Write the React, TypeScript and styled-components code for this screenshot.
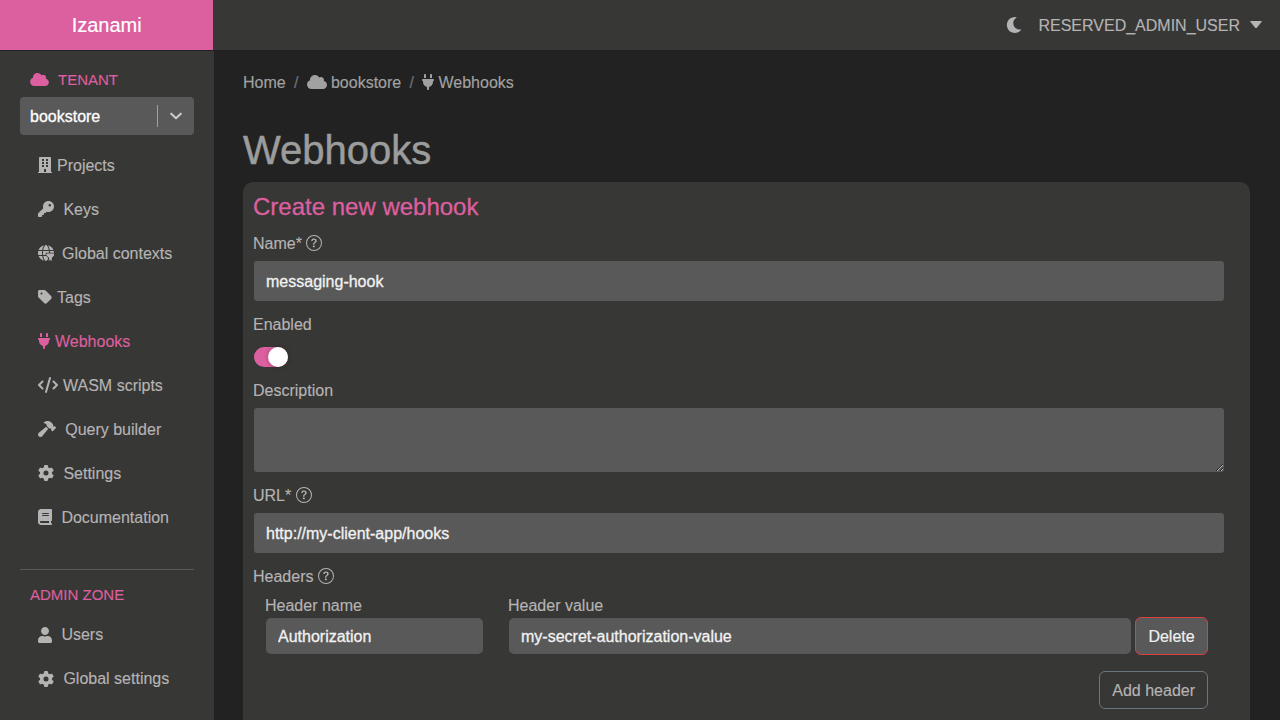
import React from "react";
import styled, { createGlobalStyle } from "styled-components";
import { BsQuestionCircle } from "react-icons/bs";
import { FaBuilding, FaMoon, FaUser } from "react-icons/fa";
import {
  FaBook,
  FaCloud,
  FaCode,
  FaGear,
  FaGlobe,
  FaHammer,
  FaKey,
  FaPlug,
  FaTag,
} from "react-icons/fa6";

const pink = "#dc5f9f";
const panel = "#373735";
const field = "#595959";
const muted = "#b5b3b3";

const GlobalStyle = createGlobalStyle`
  *, *::before, *::after { box-sizing: border-box; }
  body {
    margin: 0;
    background: #222;
    color: ${muted};
    font: 400 16px/24px "Liberation Sans", Arial, Helvetica, sans-serif;
    -webkit-text-stroke: 0.15px currentColor;
    overflow: hidden;
  }
  svg { display: block; flex: none; }
`;

const Page = styled.div`
  display: flex;
  flex-direction: column;
  height: 720px;
  overflow: hidden;
`;

const TopBar = styled.header`
  display: flex;
  flex: none;
  height: 50px;
  background: ${panel};
`;

const Brand = styled.a`
  width: 213.4px;
  background: ${pink};
  color: #fff;
  font-size: 20px;
  line-height: 50px;
  text-align: center;
`;

const Account = styled.div`
  display: flex;
  align-items: center;
  margin-left: auto;
  padding-right: 18px;
`;

const Text = styled.span<{ $drop?: number }>`
  padding-top: ${(p) => p.$drop ?? 2}px;
`;

const UserName = styled(Text)`
  margin: 0 10px 0 16px;
`;

const Body = styled.div`
  display: flex;
  flex: 1;
  min-height: 0;
`;

const Sidebar = styled.nav`
  flex: none;
  width: 214px;
  margin-top: 1px;
  padding: 17px 20px 0;
  background: ${panel};
`;

const ZoneTitle = styled.div`
  display: flex;
  align-items: center;
  gap: 9px;
  height: 22px;
  padding-left: 10px;
  color: ${pink};
  font-size: 15px;
  line-height: 22px;
`;

const TenantSelect = styled.div`
  display: flex;
  align-items: center;
  width: 173.5px;
  height: 38px;
  margin: 7px 0 8px;
  padding-left: 10px;
  border-radius: 4px;
  background: ${field};
  color: #fff;
  -webkit-text-stroke: 0.3px #fff;
`;

const SelectDivider = styled.span`
  width: 1px;
  height: 22px;
  margin-left: auto;
  background: #a0a0a0;
`;

const SelectArrow = styled.span`
  display: grid;
  place-items: center;
  width: 36px;
  color: #ccc;
`;

const NavItem = styled.a<{ $gap: number; $active?: boolean }>`
  display: flex;
  align-items: center;
  gap: ${(p) => p.$gap}px;
  height: 44px;
  padding-left: 18px;
  color: ${(p) => (p.$active ? pink : muted)};
`;

const ZoneRule = styled.hr`
  width: 173.5px;
  height: 1px;
  margin: 30px 0 14px;
  border: 0;
  background: #5a5a58;
`;

const AdminList = styled.div`
  padding-top: 7px;
`;

const Main = styled.main`
  flex: 1;
  min-width: 0;
  padding: 20px 30px 0 29px;
`;

const Breadcrumb = styled.div`
  display: flex;
  align-items: center;
  height: 24px;
  color: #a1a1a1;
`;

const Crumb = styled.span`
  display: flex;
  align-items: center;
  gap: 4.45px;
`;

const Slash = styled(Text)`
  margin: 0 8.2px;
  color: #6c757d;
`;

const Title = styled.h1`
  margin: 32px 0 8px;
  color: #9c9c9c;
  font-size: 40px;
  font-weight: 400;
  line-height: 48px;
  -webkit-text-stroke: 0.5px currentColor;
`;

const Panel = styled.section`
  height: 600px;
  padding: 10px 26px 0 10px;
  border-radius: 10px;
  background: ${panel};
`;

const PanelTitle = styled.h2`
  margin: 0 0 10px;
  color: ${pink};
  font-size: 24px;
  font-weight: 400;
  line-height: 29px;
  -webkit-text-stroke: 0.3px currentColor;
`;

const LabelRow = styled.label`
  display: flex;
  align-items: center;
  gap: 4.45px;
  height: 24px;
`;

const TextField = styled.input<{ $compact?: boolean; $width?: number }>`
  display: block;
  width: ${(p) => (p.$width ? `${p.$width}px` : "calc(100% - 1px)")};
  height: ${(p) => (p.$compact ? 36 : 40)}px;
  margin: ${(p) => (p.$compact ? "1px 0 0 1px" : "6px 0 11px 1px")};
  padding: 2px 12px 0;
  border: 0;
  border-radius: ${(p) => (p.$compact ? 5 : 3)}px;
  outline: 0;
  background: ${field};
  color: #f2f2f2;
  font: inherit;
  -webkit-text-stroke: 0.3px #f2f2f2;
`;

const TextArea = styled.textarea`
  display: block;
  width: calc(100% - 1px);
  height: 64px;
  margin: 6px 0 11px 1px;
  border: 0;
  border-radius: 3px;
  outline: 0;
  background: ${field};
  resize: vertical;
`;

const Switch = styled.div`
  display: flex;
  justify-content: flex-end;
  width: 33.5px;
  height: 20px;
  margin: 11px 0 11px 1.3px;
  border-radius: 10px;
  background: ${pink};
`;

const SwitchKnob = styled.span`
  width: 20px;
  height: 20px;
  border-radius: 50%;
  background: #fff;
  box-shadow: 0 0 5px rgba(0, 0, 0, 0.25);
`;

const HeaderRow = styled.div`
  display: flex;
  align-items: flex-end;
  padding: 5px 16px 0 12px;
`;

const HeaderColumn = styled.div<{ $gap: number }>`
  margin-right: ${(p) => p.$gap}px;
`;

const Button = styled.button<{ $danger?: boolean }>`
  height: 38px;
  padding: 2px 12px 0;
  border: 1px solid ${(p) => (p.$danger ? "#dc3f3c" : "#6c757d")};
  border-radius: 6px;
  background: ${(p) => (p.$danger ? field : "transparent")};
  color: ${(p) => (p.$danger ? "#f0f0f0" : muted)};
  font: inherit;
  white-space: nowrap;
`;

const DeleteButton = styled(Button)`
  width: 73px;
  margin-bottom: -1px;
  -webkit-text-stroke: 0.2px #f0f0f0;
`;

const AddRow = styled.div`
  display: flex;
  justify-content: flex-end;
  padding: 17px 16px 0 0;
`;

const ContextsIcon = () => (
  <svg width="16" height="16" viewBox="0 0 16 16" fill="currentColor">
    <FaGlobe size={16} />
    <path d="M8.4 8.4H16v2l-2.3 2.5V16l-2.7-1.6v-1.6l-2.6-2.6z" stroke={panel} strokeWidth="1.4" paintOrder="stroke" />
  </svg>
);

const Label = ({ children, help }: { children: React.ReactNode; help?: boolean }) => (
  <LabelRow>
    <Text>{children}</Text>
    {help && <BsQuestionCircle size={16} />}
  </LabelRow>
);

const tenantLinks = [
  { label: "Projects", icon: <FaBuilding size={16} style={{ width: 14 }} />, gap: 5 },
  { label: "Keys", icon: <FaKey size={16} />, gap: 9.4 },
  { label: "Global contexts", icon: <ContextsIcon />, gap: 8 },
  { label: "Tags", icon: <FaTag size={16} style={{ width: 14 }} />, gap: 5 },
  { label: "Webhooks", icon: <FaPlug size={16} style={{ width: 12 }} />, gap: 5, active: true },
  { label: "WASM scripts", icon: <FaCode size={16} style={{ width: 20 }} />, gap: 5 },
  { label: "Query builder", icon: <FaHammer size={16} style={{ width: 18 }} />, gap: 9.2 },
  { label: "Settings", icon: <FaGear size={16} />, gap: 9.4 },
  { label: "Documentation", icon: <FaBook size={16} style={{ width: 14 }} />, gap: 9.4 },
];

const adminLinks = [
  { label: "Users", icon: <FaUser size={16} style={{ width: 14 }} />, gap: 9.4 },
  { label: "Global settings", icon: <FaGear size={16} />, gap: 9.4 },
];

export default function App() {
  return (
    <Page>
      <GlobalStyle />
      <TopBar>
        <Brand>Izanami</Brand>
        <Account>
          <FaMoon size={16} />
          <UserName>RESERVED_ADMIN_USER</UserName>
          <svg width="12" height="8" viewBox="0 0 12 8" fill="currentColor">
            <path d="M0.7 0h10.6q0.9 0 0.4 0.8L6.8 6.8q-0.8 0.8-1.6 0L0.3 0.8Q-0.2 0 0.7 0z" />
          </svg>
        </Account>
      </TopBar>
      <Body>
        <Sidebar>
          <ZoneTitle>
            <FaCloud size={15} style={{ width: 19 }} />
            <Text>TENANT</Text>
          </ZoneTitle>
          <TenantSelect>
            <Text>bookstore</Text>
            <SelectDivider />
            <SelectArrow>
              <svg width="14" height="8" viewBox="0 0 14 8" fill="none" stroke="currentColor" strokeWidth="2.1" strokeLinecap="round" strokeLinejoin="round">
                <path d="M2.2 1.7 7 6.2l4.8-4.5" />
              </svg>
            </SelectArrow>
          </TenantSelect>
          {tenantLinks.map((link) => (
            <NavItem key={link.label} $gap={link.gap} $active={link.active}>
              {link.icon}
              <Text>{link.label}</Text>
            </NavItem>
          ))}
          <ZoneRule />
          <ZoneTitle>ADMIN ZONE</ZoneTitle>
          <AdminList>
            {adminLinks.map((link) => (
              <NavItem key={link.label} $gap={link.gap}>
                {link.icon}
                <Text $drop={0}>{link.label}</Text>
              </NavItem>
            ))}
          </AdminList>
        </Sidebar>
        <Main>
          <Breadcrumb>
            <Text>Home</Text>
            <Slash>/</Slash>
            <Crumb>
              <FaCloud size={16} style={{ width: 20 }} />
              <Text>bookstore</Text>
            </Crumb>
            <Slash>/</Slash>
            <Crumb>
              <FaPlug size={16} style={{ width: 12 }} />
              <Text>Webhooks</Text>
            </Crumb>
          </Breadcrumb>
          <Title>Webhooks</Title>
          <Panel>
            <PanelTitle>Create new webhook</PanelTitle>
            <Label help>Name*</Label>
            <TextField defaultValue="messaging-hook" />
            <Label>Enabled</Label>
            <Switch>
              <SwitchKnob />
            </Switch>
            <Label>Description</Label>
            <TextArea />
            <Label help>URL*</Label>
            <TextField defaultValue="http://my-client-app/hooks" />
            <Label help>Headers</Label>
            <HeaderRow>
              <HeaderColumn $gap={25}>
                <Label>Header name</Label>
                <TextField $compact $width={217} defaultValue="Authorization" />
              </HeaderColumn>
              <HeaderColumn $gap={4}>
                <Label>Header value</Label>
                <TextField $compact $width={622} defaultValue="my-secret-authorization-value" />
              </HeaderColumn>
              <DeleteButton $danger>Delete</DeleteButton>
            </HeaderRow>
            <AddRow>
              <Button>Add header</Button>
            </AddRow>
          </Panel>
        </Main>
      </Body>
    </Page>
  );
}
